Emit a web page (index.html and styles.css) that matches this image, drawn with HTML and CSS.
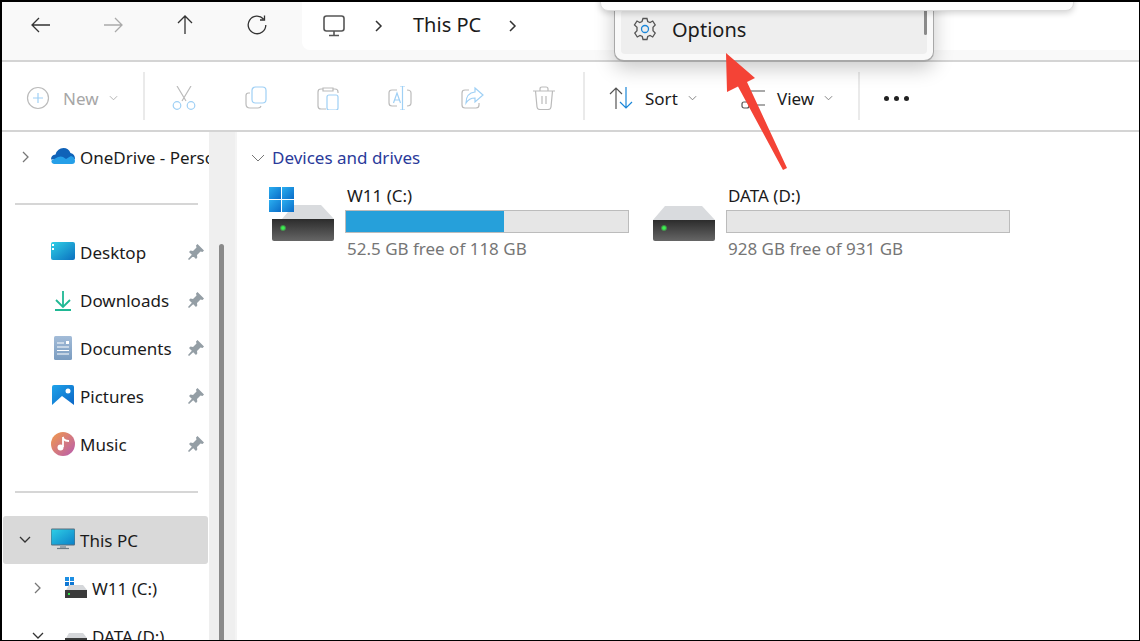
FILE: index.html
```html
<!DOCTYPE html>
<html lang="en">
<head>
<meta charset="utf-8">
<title>This PC</title>
<link rel="stylesheet" href="styles.css">
</head>
<body>
<div class="window">
  <header class="navbar">
    <div class="navbtns">
      <svg class="nav" viewBox="0 0 24 24"><path d="M21 12H3M10 5l-7 7 7 7"/></svg>
      <svg class="nav dim" viewBox="0 0 24 24"><path d="M3 12h18M14 5l7 7-7 7"/></svg>
      <svg class="nav" viewBox="0 0 24 24"><path d="M12 21V3M5 10l7-7 7 7"/></svg>
      <svg class="nav" viewBox="0 0 24 24"><path d="M18.500 6A8.800 8.800 0 1 0 20.800 12M19.500 2.500v4.500H15"/></svg>
    </div>
    <div class="crumbs">
      <svg class="pc" viewBox="0 0 24 24"><rect x="2" y="2" width="20" height="15" rx="2.500"/><path d="M12 17v4M7 21.500h10"/></svg>
      <svg class="chev" viewBox="0 0 10 14"><path d="M2 2l5 5-5 5"/></svg>
      <span class="crumb">This PC</span>
      <svg class="chev" viewBox="0 0 10 14"><path d="M2 2l5 5-5 5"/></svg>
    </div>
  </header>
  <div class="toolbar">
    <div class="tb-new dis">
      <svg class="tbi" viewBox="0 0 24 24"><circle cx="12" cy="12" r="10.500"/><path class="blue" d="M12 7v10M7 12h10"/></svg>
      <span>New</span>
      <svg class="caret" viewBox="0 0 10 6"><path d="M1 1l4 4 4-4"/></svg>
    </div>
    <i class="sep"></i>
    <div class="tb-actions">
      <svg class="tbi" viewBox="0 0 24 24"><path d="M5 0l9 15M19 0l-9 15"/><circle class="blue" cx="5" cy="19.500" r="3.800"/><circle class="blue" cx="19" cy="19.500" r="3.800"/></svg>
      <svg class="tbi" viewBox="0 0 24 24"><path d="M6 7H4.500Q2 7 2 9.500V18q0 4 4 4h8q2.500 0 3-2"/><rect class="blue" x="8" y="1" width="14" height="16" rx="3.500"/></svg>
      <svg class="tbi" viewBox="0 0 24 24"><path d="M10 23H5q-3 0-3-3V6q0-3 3-3h2M17 3h2q3 0 3 3v1M7 5V2h10v3z"/><rect class="blue" x="11" y="9" width="11" height="15" rx="2"/></svg>
      <svg class="tbi" viewBox="0 0 24 24"><path d="M9 4H4Q1 4 1 7v10q0 3 3 3h5M19 4q4 0 4 3v10q0 3-4 3"/><path class="blue" d="M12 0h5M12 24h5M14.500 0v24M5.500 17l3.500-10 3.500 10M6.500 14h5"/></svg>
      <svg class="tbi" viewBox="0 0 24 24"><path d="M9 4H5Q2 4 2 7v12q0 3 3 3h11q3 0 3-3v-2"/><path class="blue" d="M15 2l8 7-8 7v-4q-6 0-9 5 0-10 9-11z"/></svg>
      <svg class="tbi" viewBox="0 0 24 24"><path d="M1 5h22M8 5V3q0-2 2-2h4q2 0 2 2v2M3.500 5l1.500 16q.2 2.500 3 2.500h8q2.800 0 3-2.500l1.500-16M10 10v8M14 10v8"/></svg>
    </div>
    <i class="sep"></i>
    <div class="tb-cmd tb-sort">
      <svg class="tbi" viewBox="0 0 24 24"><path d="M7 23V2M1 8l6-6 6 6"/><path class="blue" d="M17 1v21M11 16l6 6 6-6"/></svg>
      <span>Sort</span>
      <svg class="caret" viewBox="0 0 10 6"><path d="M1 1l4 4 4-4"/></svg>
    </div>
    <div class="tb-cmd tb-view">
      <svg class="tbi" viewBox="0 0 24 24"><path d="M10 5h14M10 19h14"/><rect x="1" y="1" width="6" height="6" rx="3"/><rect x="1" y="16" width="7" height="6" rx="2"/></svg>
      <span>View</span>
      <svg class="caret" viewBox="0 0 10 6"><path d="M1 1l4 4 4-4"/></svg>
    </div>
    <i class="sep"></i>
    <div class="more"><b></b><b></b><b></b></div>
  </div>
  <div class="main">
    <aside class="side">
      <div class="tree">
        <div class="row"><svg class="tw" viewBox="0 0 10 14"><path d="M2 2l5 5-5 5"/></svg><svg class="ic" viewBox="0 0 24 24"><path fill="#0f62b8" d="M0 14.500Q0 10 4.500 9.500 6.500 3 12.500 3 17.500 3 19.500 8 24 9 24 14z"/><path fill="#259fe8" d="M3 19q-3-1-2.500-3.500L7 12q3-1 5 0l3 2 5-3q4 1 4 5 0 3-3 3z"/></svg><span class="clip">OneDrive - Personal</span></div>
        <hr class="rule">
        <div class="row pinned"><svg class="ic" viewBox="0 0 24 24"><defs><linearGradient id="d" x1="0" y1="0" x2="1" y2="1"><stop offset="0" stop-color="#2fd0e6"/><stop offset="1" stop-color="#0b6fbf"/></linearGradient></defs><rect y="2" width="24" height="18" rx="2" fill="url(#d)"/><rect x="1" y="4" width="2" height="2" fill="#fff"/><rect x="1" y="8" width="2" height="2" fill="#fff"/></svg><span>Desktop</span><svg class="pin" viewBox="0 0 16 16"><path d="M9.500 0L16 6.500 14.500 8l-2-.5L9 11l.3 2.500L8 15 1 8l1.500-1.500L5 7l3.500-3.500L8 1.500zM4.500 10l1.500 1.500L1 16l-1-1z"/></svg></div>
        <div class="row pinned"><svg class="ic" viewBox="0 0 24 24"><path d="M12 3v16M5 12l7 7 7-7M4 22h16" fill="none" stroke="#1fb894" stroke-width="1.800"/></svg><span>Downloads</span><svg class="pin" viewBox="0 0 16 16"><path d="M9.500 0L16 6.500 14.500 8l-2-.5L9 11l.3 2.500L8 15 1 8l1.500-1.500L5 7l3.500-3.500L8 1.500zM4.500 10l1.500 1.500L1 16l-1-1z"/></svg></div>
        <div class="row pinned"><svg class="ic" viewBox="0 0 24 24"><defs><linearGradient id="o" x1="0" y1="0" x2="0" y2="1"><stop offset="0" stop-color="#a3bcd8"/><stop offset="1" stop-color="#7a9cc0"/></linearGradient></defs><rect x="3" width="18" height="24" rx="1.500" fill="url(#o)"/><path d="M6 7h7M6 11h12M6 14.500h12M6 18h12" stroke="#fff" stroke-width="1.200"/><rect x="15" y="5" width="3" height="3" fill="#fff"/></svg><span>Documents</span><svg class="pin" viewBox="0 0 16 16"><path d="M9.500 0L16 6.500 14.500 8l-2-.5L9 11l.3 2.500L8 15 1 8l1.500-1.500L5 7l3.500-3.500L8 1.500zM4.500 10l1.500 1.500L1 16l-1-1z"/></svg></div>
        <div class="row pinned"><svg class="ic" viewBox="0 0 24 24"><defs><linearGradient id="p" x1="0" y1="0" x2="1" y2="1"><stop offset="0" stop-color="#1fa3ea"/><stop offset="1" stop-color="#0a63c4"/></linearGradient></defs><rect x="1" y="1" width="22" height="22" rx="2" fill="url(#p)"/><path d="M1 21l10-9 12 9v2H1z" fill="#fff"/><circle cx="17" cy="7" r="2.500" fill="#fff"/></svg><span>Pictures</span><svg class="pin" viewBox="0 0 16 16"><path d="M9.500 0L16 6.500 14.500 8l-2-.5L9 11l.3 2.500L8 15 1 8l1.500-1.500L5 7l3.500-3.500L8 1.500zM4.500 10l1.500 1.500L1 16l-1-1z"/></svg></div>
        <div class="row pinned"><svg class="ic" viewBox="0 0 24 24"><defs><linearGradient id="m" x1="0" y1="0" x2="1" y2="1"><stop offset="0" stop-color="#f29a4a"/><stop offset="1" stop-color="#b85bb0"/></linearGradient></defs><circle cx="12" cy="12" r="12" fill="url(#m)"/><path d="M12 5v10" stroke="#fff" stroke-width="1.800"/><path d="M12 4q1 4 6 4v2q-4 0-6-2z" fill="#fff"/><circle cx="9.500" cy="15.500" r="3" fill="#fff"/></svg><span>Music</span><svg class="pin" viewBox="0 0 16 16"><path d="M9.500 0L16 6.500 14.500 8l-2-.5L9 11l.3 2.500L8 15 1 8l1.500-1.500L5 7l3.500-3.500L8 1.500zM4.500 10l1.500 1.500L1 16l-1-1z"/></svg></div>
        <hr class="rule rule2">
        <div class="row selected"><svg class="tw open" viewBox="0 0 14 10"><path d="M2 2l5 5 5-5"/></svg><svg class="ic" viewBox="0 0 24 24"><defs><linearGradient id="s" x1="0" y1="0" x2="1" y2="1"><stop offset="0" stop-color="#2fd0e6"/><stop offset="1" stop-color="#0b7fc8"/></linearGradient></defs><rect y="1" width="24" height="16" rx="1" fill="url(#s)" stroke="#5a6b78"/><path d="M9 17h6v3H9z" fill="#9aa5ad"/><path d="M6 20.500h12" stroke="#6d7a84" stroke-width="1.200"/></svg><span>This PC</span></div>
        <div class="row child"><svg class="tw" viewBox="0 0 10 14"><path d="M2 2l5 5-5 5"/></svg><svg class="ic2" viewBox="0 0 24 24"><rect x="1" y="1" width="4" height="4" fill="#1d8fe3"/><rect x="6" y="1" width="4" height="4" fill="#1d8fe3"/><rect x="1" y="6" width="4" height="4" fill="#0f78d4"/><rect x="6" y="6" width="4" height="4" fill="#0f78d4"/><path d="M2 14l3-5h14l4 5z" fill="#d5d7da"/><rect x="1" y="14" width="22" height="8" fill="#3b3b3b"/><rect x="4" y="17" width="2" height="2" fill="#34e24a"/></svg><span>W11 (C:)</span></div>
        <div class="row child"><svg class="tw open" viewBox="0 0 14 10"><path d="M2 2l5 5 5-5"/></svg><svg class="ic2" viewBox="0 0 24 24"><path d="M2 14l3-5h14l4 5z" fill="#d5d7da"/><rect x="1" y="14" width="22" height="8" fill="#3b3b3b"/><rect x="4" y="17" width="2" height="2" fill="#34e24a"/></svg><span>DATA (D:)</span></div>
      </div>
      <div class="track"><div class="thumb"></div></div>
    </aside>
    <section class="content">
      <div class="group"><svg class="gchev" viewBox="0 0 14 8"><path d="M1 1l6 6 6-6"/></svg><span>Devices and drives</span></div>
      <div class="drives">
        <div class="drive">
          <svg class="hdd" viewBox="0 0 68 56"><defs><linearGradient id="h1" x1="0" y1="0" x2="0" y2="1"><stop offset="0" stop-color="#2c2c2c"/><stop offset="1" stop-color="#666"/></linearGradient><linearGradient id="w1" x1="0" y1="0" x2="1" y2="1"><stop offset="0" stop-color="#2aaef0"/><stop offset="1" stop-color="#0a6cc8"/></linearGradient><radialGradient id="g1"><stop offset=".35" stop-color="#3cf04f"/><stop offset="1" stop-color="#3cf04f" stop-opacity="0"/></radialGradient></defs><path d="M14 33l12-14h27l13 14z" fill="#d9dbde"/><path d="M4 33h62v20q0 2-2 2H6q-2 0-2-2z" fill="url(#h1)"/><rect x="1" y="1" width="12" height="12" fill="url(#w1)"/><rect x="14" y="1" width="12" height="12" fill="url(#w1)"/><rect x="1" y="14" width="12" height="12" fill="url(#w1)"/><rect x="14" y="14" width="12" height="12" fill="url(#w1)"/><circle cx="15" cy="42" r="3.500" fill="url(#g1)"/></svg>
          <div class="info"><div class="dname">W11 (C:)</div><div class="bar"><div class="fill" style="width:56%"></div></div><div class="dfree">52.5 GB free of 118 GB</div></div>
        </div>
        <div class="drive">
          <svg class="hdd" viewBox="0 0 68 56"><defs><linearGradient id="h2" x1="0" y1="0" x2="0" y2="1"><stop offset="0" stop-color="#2c2c2c"/><stop offset="1" stop-color="#666"/></linearGradient><radialGradient id="g2"><stop offset=".35" stop-color="#3cf04f"/><stop offset="1" stop-color="#3cf04f" stop-opacity="0"/></radialGradient></defs><path d="M4 34l12-14h37l13 14z" fill="#d9dbde"/><path d="M4 34h62v19q0 2-2 2H6q-2 0-2-2z" fill="url(#h2)"/><circle cx="15" cy="42" r="3.500" fill="url(#g2)"/></svg>
          <div class="info"><div class="dname">DATA (D:)</div><div class="bar"></div><div class="dfree">928 GB free of 931 GB</div></div>
        </div>
      </div>
    </section>
  </div>
  <div class="menu-back"></div>
  <div class="menu"><div class="opt"><svg class="gear" viewBox="0 0 24 24"><path d="M10 1.500h4l.7 3 2.300 1 2.700-1.500 2.500 4-2.200 2.200v3.600l2.200 2.200-2.500 4-2.700-1.500-2.300 1-.7 3h-4l-.7-3-2.300-1-2.700 1.500-2.500-4 2.200-2.200v-3.600L1.500 8l2.500-4 2.700 1.500 2.300-1z"/><circle class="blue" cx="12" cy="12" r="3.500"/></svg><span>Options</span></div><div class="menu-thumb"></div></div>
  <svg class="arrow" viewBox="0 0 64 120"><path d="M0 0L29 25 21 29 61 115 57 117 12 33.500 1 39z"/></svg>
</div>
</body>
</html>
```
FILE: styles.css
```css
* { box-sizing: border-box; }
html, body { margin: 0; padding: 0; height: 100%; overflow: hidden; background: #000; }
body { font-family: "Noto Sans", "Open Sans", sans-serif; font-size: 17px; color: #1b1b1b; }
.window { position: relative; width: 1137px; height: 638px; margin: 2px 0 0 2px; background: #fff; display: flex; flex-direction: column; overflow: hidden; }

.navbar { height: 58px; background: #f9f9f9; display: flex; flex: none; }
.navbtns { width: 300px; display: flex; align-items: center; padding: 0 0 12px 27px; gap: 48px; }
.nav { width: 24px; height: 24px; fill: none; stroke: #333; stroke-width: 1.300; }
.nav.dim { stroke: #aaa; }
.crumbs { flex: 1; background: #fff; border-radius: 0 0 0 8px; height: 48px; display: flex; align-items: center; padding-left: 20px; }
.pc { width: 24px; height: 24px; fill: none; stroke: #555; stroke-width: 1.600; }
.chev { width: 10px; height: 14px; fill: none; stroke: #333; stroke-width: 1.500; margin-left: 28px; }
.crumb { font-size: 20px; margin-left: 29px; line-height: 24px; padding-bottom: 2px; }
.crumb + .chev { margin-left: 27px; }

.toolbar { height: 72px; flex: none; background: #fff; border-top: 2px solid #d4d4d4; border-bottom: 2px solid #d4d4d4; display: flex; align-items: center; padding-top: 4px; }
.tbi { width: 24px; height: 24px; fill: none; stroke: #555; stroke-width: 1.200; flex: none; }
.blue { stroke: #1a86d8; }
.dis .tbi, .tb-actions .tbi { stroke: #bbb; }
.dis .blue, .tb-actions .blue { stroke: #9fd0f5; }
.dis { color: #a6a6a6; }
.tb-new { display: flex; align-items: center; width: 141px; padding-left: 24px; gap: 13px; }
.caret { width: 9px; height: 6px; fill: none; stroke: #777; stroke-width: 1; margin-left: -2px; }
.dis .caret { stroke: #aaa; margin-left: -3px; }
.sep { width: 2px; height: 48px; background: #eaeaea; flex: none; margin-top: -4px; }
.tb-actions { display: flex; width: 438px; padding-left: 27px; gap: 48px; align-items: center; }
.tb-cmd { display: flex; align-items: center; gap: 12px; }
.tb-sort { margin-left: 24px; width: 132px; }
.tb-view { width: 117px; }
.more { display: flex; gap: 5px; margin-left: 24px; }
.more b { width: 5px; height: 5px; border-radius: 50%; background: #222; }

.main { flex: 1; min-height: 0; display: flex; }
.side { width: 233px; flex: none; display: flex; }
.tree { width: 207px; flex: none; overflow: hidden; padding-top: 1px; }
.row { height: 48px; display: flex; align-items: center; padding-left: 19px; white-space: nowrap; position: relative; }
.tw { width: 10px; height: 14px; fill: none; stroke: #777; stroke-width: 1.300; margin-right: 20px; flex: none; }
.tw.open { width: 14px; height: 10px; stroke: #333; margin-right: 19px; }
.ic { width: 24px; height: 24px; margin-right: 5px; flex: none; }
.ic2 { width: 24px; height: 24px; margin-right: 4px; flex: none; }
.clip { overflow: hidden; }
.pinned { padding-left: 49px; }
.pin { position: absolute; left: 186px; top: 16px; width: 16px; height: 16px; fill: #949ea5; }
.rule { border: 0; height: 2px; background: #d6d6d6; margin: 22px 11px 23px 13px; }
.rule2 { margin: 23px 11px 23px 13px; }
.selected { background: #d9d9d9; border-radius: 3px; margin: 0 1px; padding-left: 15px; }
.child { padding-left: 31px; }
.child .tw { margin-right: 21px; }
.child .tw.open { margin-right: 19px; margin-left: -2px; }

.track { width: 26px; background: #efefef; flex: none; position: relative; }
.thumb { position: absolute; left: 10px; top: 112px; width: 5px; height: 400px; border-radius: 3px; background: #8a8a8a; }

.content { flex: 1; padding: 14px 0 0 14px; border-left: 2px solid #f4f4f4; }
.group { display: flex; align-items: center; color: #2a3a9a; gap: 7px; line-height: 24px; }
.gchev { width: 14px; height: 8px; fill: none; stroke: #777; stroke-width: 1; }
.drives { display: flex; margin-top: 14px; margin-left: 17px; }
.drive { display: flex; width: 381px; }
.hdd { width: 68px; height: 56px; flex: none; margin-right: 9px; margin-top: 2px; }
.info { width: 284px; }
.dname { line-height: 24px; padding-left: 2px; }
.bar { height: 23px; border: 1px solid #bcbcbc; background: #e6e6e6; margin-top: 2px; }
.fill { height: 100%; background: #26a0da; }
.dfree { color: #767676; line-height: 24px; margin-top: 4px; padding-left: 2px; }

.menu-back { position: absolute; left: 598px; top: -20px; width: 474px; height: 29px; background: #fcfcfc; border: 1px solid #dcdcdc; border-radius: 8px; box-shadow: 0 2px 6px rgba(0,0,0,.18); z-index: 3; }
.menu { position: absolute; left: 612px; top: -20px; width: 320px; height: 80px; background: #f9f9f9; border: 1px solid #a8a8a8; border-bottom-width: 2px; border-radius: 10px; box-shadow: 0 6px 20px rgba(0,0,0,.22); z-index: 2; padding: 0 6px 6px; display: flex; align-items: flex-end; }
.opt { flex: 1; height: 44px; background: #eeeeee; border-radius: 4px; display: flex; align-items: center; padding-left: 12px; gap: 15px; font-size: 20px; padding-bottom: 6px; }
.gear { width: 24px; height: 24px; fill: none; stroke: #555; stroke-width: 1.300; }
.menu-thumb { position: absolute; right: 6px; top: 26px; width: 3px; height: 26px; background: #8a8a8a; border-radius: 2px; }
.arrow { position: absolute; left: 724px; top: 51px; width: 64px; height: 120px; fill: #f44336; z-index: 4; }
```
